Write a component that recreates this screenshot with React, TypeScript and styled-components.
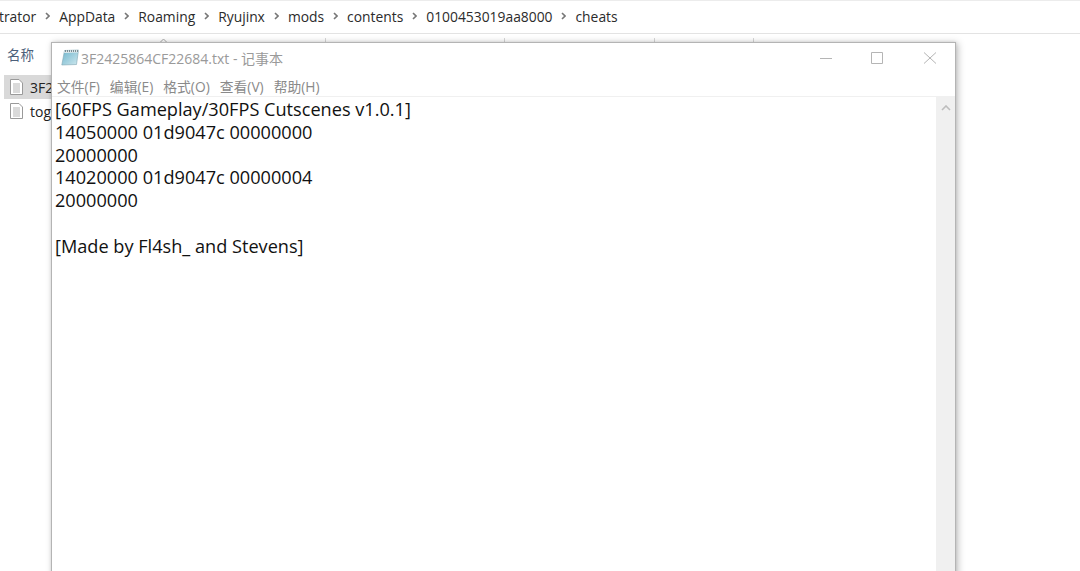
import React from 'react';
import styled, {createGlobalStyle} from 'styled-components';

const Global = createGlobalStyle`
  html, body {
    margin: 0;
    padding: 0;
    width: 1080px;
    height: 571px;
    overflow: hidden;
    background: #fff;
    font-family: "Open Sans", "Noto Sans CJK SC", sans-serif;
  }
`;

const Page = styled.div`
  position: relative;
  width: 1080px;
  height: 571px;
  overflow: hidden;
  background: #fff;
`;

const Breadcrumb = styled.div`
  display: flex;
  align-items: center;
  box-sizing: border-box;
  height: 34px;
  padding-bottom: 2px;
  margin-left: -1px;
  border-top: 1px solid #ececec;
  border-bottom: 1px solid #e3e3e3;
  font-size: 13.85px;
  color: #2b2b2b;
  white-space: nowrap;
`;

const Sep = styled.svg`
  width: 5px;
  height: 8px;
  margin: 0 9px;
  flex: none;
`;

const ListHead = styled.div`
  display: flex;
  height: 41px;
  font-size: 13.5px;
  color: #4c607a;
`;

const HeadCell = styled.div<{width: number}>`
  position: relative;
  box-sizing: border-box;
  width: ${props => props.width}px;
  height: 29px;
  padding: 10px 0 0 7px;

  &::after {
    content: '';
    position: absolute;
    right: 0;
    top: 4px;
    width: 1px;
    height: 5px;
    background: #d6d6d6;
  }
`;

const Row = styled.div<{selected?: boolean}>`
  display: flex;
  align-items: center;
  gap: 7px;
  box-sizing: border-box;
  width: 48px;
  height: 24px;
  margin-left: 4px;
  padding-left: 6px;
  overflow: hidden;
  font-size: 14px;
  color: #222;
  white-space: nowrap;
  background: ${props => props.selected ? '#d9d9d9' : 'transparent'};
`;

const SortMark = styled.svg`
  position: absolute;
  left: 159px;
  top: 38px;
  width: 9px;
  height: 5px;
`;

const NotepadWindow = styled.div`
  position: absolute;
  left: 51px;
  top: 42px;
  width: 905px;
  height: 540px;
  box-sizing: border-box;
  display: flex;
  flex-direction: column;
  background: #fff;
  border: 1px solid #b4b4b4;
  box-shadow: 2px 1px 7px rgba(0, 0, 0, 0.25), 0 0 3px rgba(0, 0, 0, 0.1);
`;

const TitleBar = styled.div`
  display: flex;
  align-items: center;
  box-sizing: border-box;
  height: 32px;
  flex: none;
  padding: 0 0 3px 9px;
`;

const TitleText = styled.span`
  margin-left: 2px;
  font-size: 14px;
  color: #9a9a9a;
`;

const WindowControls = styled.div`
  display: flex;
  align-items: center;
  margin-left: auto;
`;

const ControlIcon = styled.svg`
  display: block;
  width: 52px;
  height: 14px;
`;

const MenuBar = styled.div`
  display: flex;
  gap: 10px;
  align-items: center;
  height: 21px;
  flex: none;
  padding-left: 5px;
  font-size: 13.8px;
  color: #8a8a8a;
  border-bottom: 1px solid #f0f0f0;
`;

const EditorArea = styled.div`
  display: flex;
  flex: 1;
  min-height: 0;
`;

const Editor = styled.pre`
  flex: 1;
  margin: 0;
  padding: 1px 0 0 3px;
  font-family: "Open Sans", sans-serif;
  font-size: 18.15px;
  line-height: 22.8px;
  color: #111;
`;

const Scrollbar = styled.div`
  width: 19px;
  flex: none;
  background: #f0f0f0;
  display: flex;
  justify-content: center;
  padding-top: 8px;
  box-sizing: border-box;
`;

const ScrollArrow = styled.svg`
  width: 10px;
  height: 6px;
`;

const PATH = ['trator', 'AppData', 'Roaming', 'Ryujinx', 'mods', 'contents', '0100453019aa8000', 'cheats'];
const MENUS = ['文件(F)', '编辑(E)', '格式(O)', '查看(V)', '帮助(H)'];
const COLUMNS = [326, 179, 150, 99];
const TEXT = `[60FPS Gameplay/30FPS Cutscenes v1.0.1]
14050000 01d9047c 00000000
20000000
14020000 01d9047c 00000004
20000000

[Made by Fl4sh_ and Stevens]`;

const FileIcon = () => (
    <svg width="13" height="16" viewBox="0 0 13 16" style={{flex: 'none'}}>
        <path d="M.5.5h8.5l3.500 3.500v11.500H.5z" fill="#fff" stroke="#9a9a9a" />
        <path d="M3 5h7M3 7h7M3 9h7M3 11h7M3 13h7" stroke="#b5b5b5" />
    </svg>
);

const NotepadIcon = () => (
    <svg width="18" height="17" viewBox="0 0 18 17" style={{flex: 'none'}}>
        <defs>
            <linearGradient id="pad" x1="0" y1="0" x2="1" y2="1">
                <stop offset="0" stopColor="#6db4cc" />
                <stop offset="1" stopColor="#cfe8ee" />
            </linearGradient>
        </defs>
        <path d="M3.500 1.500 17.500 1 15.500 15.500 .8 16z" fill="url(#pad)" stroke="#7fa6b4" strokeWidth=".6" />
        <path d="M3.500 1.500 17.500 1 17 3.500 3.100 4z" fill="#dfe9ec" />
        <path d="M4.500 1v2M6.500 1v2M8.500 1v2M10.500 1v2M12.500 1v2M14.500 1v2M16.500 1v2" stroke="#66767c" strokeWidth=".8" />
    </svg>
);

const App = () => (
    <Page>
        <Global />
        <Breadcrumb>
            {PATH.map((part, i) => (
                <React.Fragment key={part}>
                    {i > 0 ? (
                        <Sep viewBox="0 0 5 8">
                            <path d="M1 1l3 3-3 3" fill="none" stroke="#777" strokeWidth="1.6" />
                        </Sep>
                    ) : null}
                    <span>{part}</span>
                </React.Fragment>
            ))}
        </Breadcrumb>
        <SortMark viewBox="0 0 9 5">
            <path d="M1 4.500l3.500-3.500 3.500 3.500" fill="none" stroke="#a8a8a8" />
        </SortMark>
        <ListHead>
            {COLUMNS.map((width, i) => (
                <HeadCell key={width} width={width}>{i === 0 ? '名称' : null}</HeadCell>
            ))}
        </ListHead>
        <Row selected><FileIcon />3F2425864CF22684.txt</Row>
        <Row><FileIcon />toggle.txt</Row>
        <NotepadWindow>
            <TitleBar>
                <NotepadIcon />
                <TitleText>3F2425864CF22684.txt - 记事本</TitleText>
                <WindowControls>
                    <ControlIcon viewBox="0 0 52 14">
                        <path d="M21 7.500h12" stroke="#b5b5b5" />
                    </ControlIcon>
                    <ControlIcon viewBox="0 0 52 14">
                        <path d="M20.500 1.500h11v11h-11z" fill="none" stroke="#b5b5b5" />
                    </ControlIcon>
                    <ControlIcon viewBox="0 0 52 14">
                        <path d="M21 1.500l12 11M33 1.500l-12 11" stroke="#b5b5b5" />
                    </ControlIcon>
                </WindowControls>
            </TitleBar>
            <MenuBar>
                {MENUS.map(menu => <span key={menu}>{menu}</span>)}
            </MenuBar>
            <EditorArea>
                <Editor>{TEXT}</Editor>
                <Scrollbar>
                    <ScrollArrow viewBox="0 0 10 6">
                        <path d="M1 5l4-4 4 4" fill="none" stroke="#bdbdbd" strokeWidth="1.6" />
                    </ScrollArrow>
                </Scrollbar>
            </EditorArea>
        </NotepadWindow>
    </Page>
);

export default App;
